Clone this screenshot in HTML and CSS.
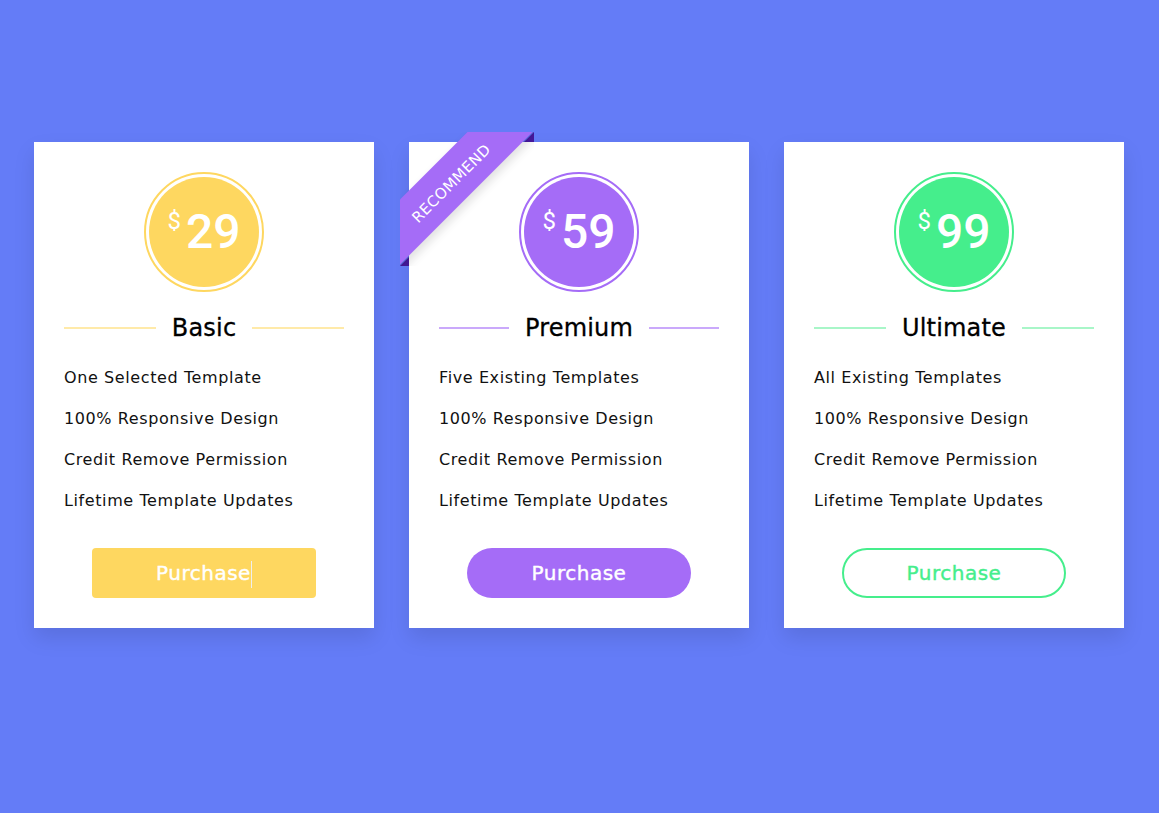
FILE: index.html
```html
<!DOCTYPE html>
<html lang="en">
<head>
<meta charset="utf-8">
<title>Pricing</title>
<link rel="stylesheet" href="styles.css">
</head>
<body>
<main class="pricing">
  <section class="card basic">
    <div class="ring"><div class="disc"><span class="cur">$</span><span class="amt">29</span></div></div>
    <div class="title"><span class="rule"></span><h2>Basic</h2><span class="rule"></span></div>
    <ul class="features">
      <li>One Selected Template</li>
      <li>100% Responsive Design</li>
      <li>Credit Remove Permission</li>
      <li>Lifetime Template Updates</li>
    </ul>
    <a class="btn" href="#">Purchase<span class="caret"></span></a>
  </section>
  <section class="card premium">
    <div class="ribbon"><span>Recommend</span></div>
    <div class="ring"><div class="disc"><span class="cur">$</span><span class="amt">59</span></div></div>
    <div class="title"><span class="rule"></span><h2>Premium</h2><span class="rule"></span></div>
    <ul class="features">
      <li>Five Existing Templates</li>
      <li>100% Responsive Design</li>
      <li>Credit Remove Permission</li>
      <li>Lifetime Template Updates</li>
    </ul>
    <a class="btn" href="#">Purchase</a>
  </section>
  <section class="card ultimate">
    <div class="ring"><div class="disc"><span class="cur">$</span><span class="amt">99</span></div></div>
    <div class="title"><span class="rule"></span><h2>Ultimate</h2><span class="rule"></span></div>
    <ul class="features">
      <li>All Existing Templates</li>
      <li>100% Responsive Design</li>
      <li>Credit Remove Permission</li>
      <li>Lifetime Template Updates</li>
    </ul>
    <a class="btn" href="#">Purchase</a>
  </section>
</main>
</body>
</html>
```
FILE: styles.css
```css
* { box-sizing: border-box; }
html, body { margin: 0; }
body {
  background: #647cf7;
  font-family: "DejaVu Sans", "Open Sans", sans-serif;
  min-height: 813px;
}
.pricing {
  display: flex;
  gap: 35px;
  padding: 142px 0 0 34px;
}
.card {
  position: relative;
  width: 340px;
  background: #fff;
  padding: 30px;
  box-shadow: 0 10px 20px rgba(0, 0, 0, 0.1);
}
.basic { --c: #fed760; --l: #ffeaa9; }
.premium { --c: #a56cf7; --l: #caa9fb; }
.ultimate { --c: #45ee8c; --l: #a8f6c8; }

.ring {
  width: 120px;
  height: 120px;
  margin: 0 auto;
  border: 2px solid var(--c);
  border-radius: 50%;
  padding: 3px;
}
.disc {
  width: 100%;
  height: 100%;
  border-radius: 50%;
  background: var(--c);
  display: flex;
  justify-content: center;
  align-items: center;
  color: #fff;
  font-family: Roboto, "Liberation Sans", sans-serif;
  line-height: 1;
}
.disc .cur { font-size: 24px; margin-top: -22px; margin-right: 5px; }
.disc .amt { font-size: 48px; font-weight: 500; }

.title {
  display: flex;
  align-items: center;
  gap: 16px;
  height: 30px;
  margin-top: 21px;
}
.title .rule {
  flex: 1;
  height: 2px;
  background: var(--l);
}
.title h2 {
  margin: 0;
  font-size: 24px;
  font-weight: 400;
  letter-spacing: 0.2px;
  color: #000;
  line-height: 30px;
  -webkit-text-stroke: 0.3px currentColor;
}
.features {
  list-style: none;
  margin: 14px 0 0;
  padding: 0;
}
.features li {
  font-size: 16px;
  letter-spacing: 0.6px;
  line-height: 41px;
  color: #111;
}
.btn {
  display: block;
  width: 224px;
  height: 50px;
  margin: 27px auto 0;
  line-height: 50px;
  text-align: center;
  text-decoration: none;
  font-size: 20px;
  letter-spacing: 0.5px;
  font-weight: 400;
  color: #fff;
  background: var(--c);
  position: relative;
  -webkit-text-stroke: 0.4px currentColor;
}
.basic .btn { border-radius: 4px; }
.premium .btn { border-radius: 25px; }
.ultimate .btn {
  border-radius: 25px;
  background: #fff;
  border: 2px solid var(--c);
  line-height: 46px;
  color: var(--c);
}
.caret {
  display: inline-block;
  width: 1px;
  height: 27px;
  background: #eee;
  vertical-align: middle;
  margin-left: 0;
}

.ribbon {
  position: absolute;
  top: -10px;
  left: -9px;
  width: 134px;
  height: 134px;
  overflow: hidden;
}
.ribbon::before,
.ribbon::after {
  content: "";
  position: absolute;
  z-index: -1;
  border: 5px solid #4a1aa5;
  border-top-color: transparent;
  border-left-color: transparent;
}
.ribbon::before { top: 0; right: 0; }
.ribbon::after { bottom: 0; left: 0; }
.ribbon span {
  position: absolute;
  left: -50px;
  top: 27px;
  width: 200px;
  height: 46px;
  line-height: 51px;
  transform: rotate(-45deg);
  background: #a56cf7;
  color: #fff;
  text-align: center;
  text-transform: uppercase;
  font-size: 15px;
  letter-spacing: 0.4px;
  box-shadow: 0 5px 10px rgba(0, 0, 0, 0.12);
}
```
